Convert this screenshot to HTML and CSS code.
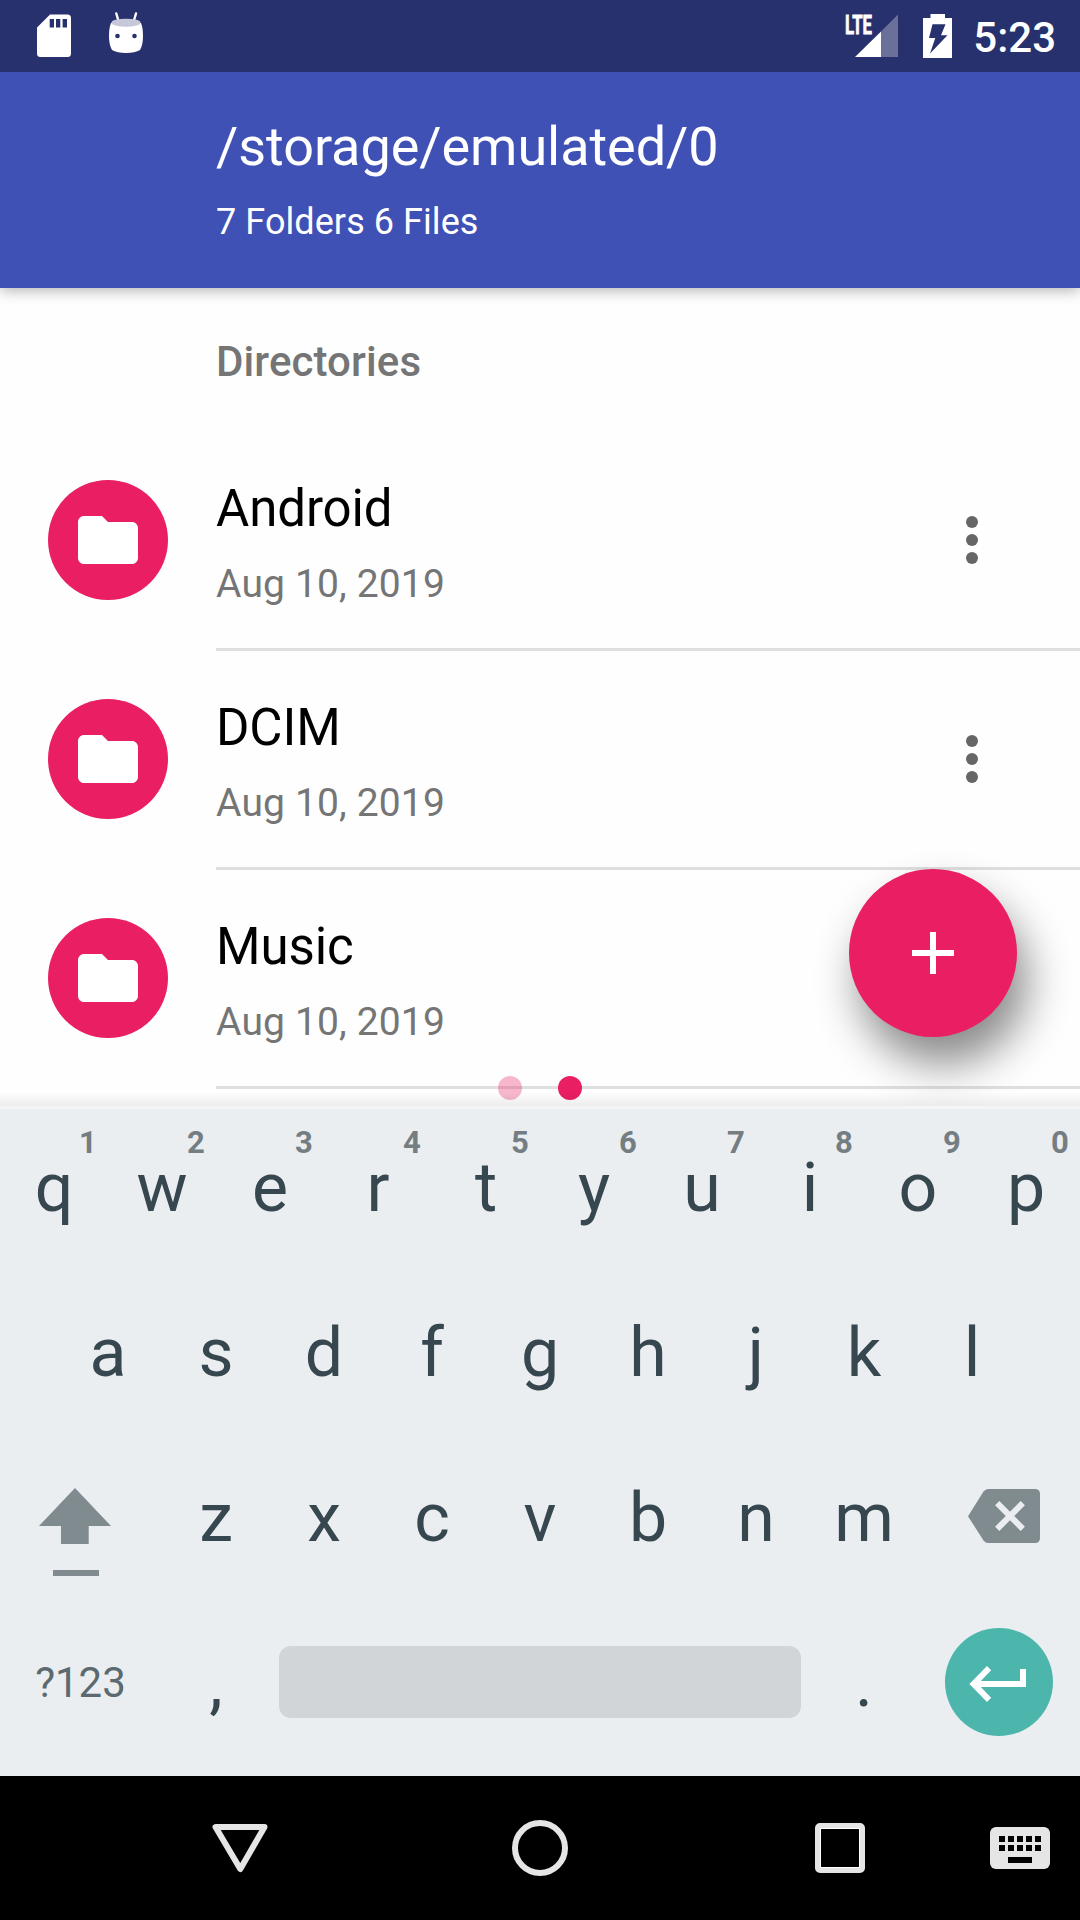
FILE: index.html
```html
<!DOCTYPE html>
<html lang="en">
<head>
<meta charset="utf-8">
<title>Files</title>
<link rel="stylesheet" href="styles.css">
</head>
<body>
<svg class="defs" width="0" height="0" aria-hidden="true">
  <symbol id="folder" viewBox="0 0 24 24"><path d="M10 4H4c-1.1 0-2 .9-2 2v12c0 1.1.9 2 2 2h16c1.1 0 2-.9 2-2V8c0-1.1-.9-2-2-2h-8z"/></symbol>
  <symbol id="more" viewBox="0 0 24 24"><circle cx="12" cy="6" r="2"/><circle cx="12" cy="12" r="2"/><circle cx="12" cy="18" r="2"/></symbol>
</svg>
<div class="screen">
  <header class="status">
    <svg width="160" height="72" viewBox="0 0 160 72">
      <path fill="#fff" fill-rule="evenodd" d="M50 14.600H67.500a3.500 3.500 0 0 1 3.500 3.500V53.500a3.500 3.500 0 0 1-3.500 3.500H40.500a3.500 3.500 0 0 1-3.500-3.500V27.500zM49.700 19V27.600H54V19zM56 19V27.600H60.300V19zM62.600 19V27.600H67V19z"/>
      <path d="M116.300 13.500l2.200 7.500M136 13.500l-2.200 7.500" stroke="#fff" stroke-width="2.400" stroke-linecap="round"/>
      <path fill="#fff" d="M111 23Q109 28 109 36Q109 45 112 50Q117 53 126 53Q135 53 140 50Q143 45 143 36Q143 28 141 23z"/>
      <ellipse cx="126" cy="22.700" rx="14.600" ry="4" fill="#c6c8d9"/>
      <circle cx="117.500" cy="36" r="2.300" fill="#27316d"/><circle cx="134.500" cy="36" r="2.300" fill="#27316d"/>
    </svg>
    <div class="status-end">
      <svg width="110" height="72" viewBox="845 0 110 72">
        <text class="lte" x="845" y="33.500" textLength="27" lengthAdjust="spacingAndGlyphs">LTE</text>
        <path fill="#fff" d="M855 57L881 31.500V57z"/>
        <path fill="#6b709a" d="M881 31.500L898 14.500V57H881z"/>
        <path fill="#fff" fill-rule="evenodd" d="M930.500 14H945v4h7v40H923V18h7.500zM932.500 24.300L929 38h6.300L930 53.500L947.500 35.300H941L945.500 24.300z"/>
      </svg>
      <span class="clock">5:23</span>
    </div>
  </header>

  <header class="appbar">
    <h1 class="title">/storage/emulated/0</h1>
    <p class="subtitle">7 Folders 6 Files</p>
  </header>

  <main class="content">
    <h2 class="section">Directories</h2>
    <ul class="list">
      <li class="row"><span class="avatar"><svg width="72" height="72"><use href="#folder"/></svg></span>
        <div class="body"><div class="text"><p class="name">Android</p><p class="date">Aug 10, 2019</p></div><svg class="more" width="72" height="72"><use href="#more"/></svg></div></li>
      <li class="row"><span class="avatar"><svg width="72" height="72"><use href="#folder"/></svg></span>
        <div class="body"><div class="text"><p class="name">DCIM</p><p class="date">Aug 10, 2019</p></div><svg class="more" width="72" height="72"><use href="#more"/></svg></div></li>
      <li class="row"><span class="avatar"><svg width="72" height="72"><use href="#folder"/></svg></span>
        <div class="body"><div class="text"><p class="name">Music</p><p class="date">Aug 10, 2019</p></div></div></li>
    </ul>
    <button class="fab" aria-label="Add"><svg width="72" height="72" viewBox="0 0 24 24"><path fill="#fff" d="M19 13h-6v6h-2v-6H5v-2h6V5h2v6h6z"/></svg></button>
    <div class="pager"><i class="dot"></i><i class="dot active"></i></div>
    <div class="edge"></div>
  </main>

  <section class="keyboard">
    <div class="keys">
      <span class="key">q<sup>1</sup></span><span class="key">w<sup>2</sup></span><span class="key">e<sup>3</sup></span><span class="key">r<sup>4</sup></span><span class="key">t<sup>5</sup></span><span class="key">y<sup>6</sup></span><span class="key">u<sup>7</sup></span><span class="key">i<sup>8</sup></span><span class="key">o<sup>9</sup></span><span class="key">p<sup>0</sup></span>
    </div>
    <div class="keys">
      <span class="key">a</span><span class="key">s</span><span class="key">d</span><span class="key">f</span><span class="key">g</span><span class="key">h</span><span class="key">j</span><span class="key">k</span><span class="key">l</span>
    </div>
    <div class="keys">
      <svg width="162" height="165" viewBox="0 0 162 165" fill="#808b8f"><path d="M75 49L111 87H88.700V105H61V87H39zM53 131H99V137H53z"/></svg>
      <span class="key">z</span><span class="key">x</span><span class="key">c</span><span class="key">v</span><span class="key">b</span><span class="key">n</span><span class="key">m</span>
      <svg width="162" height="165" viewBox="0 0 162 165"><path fill="#808b8f" d="M50 77.200L65.500 52.500Q67.500 50 70 50H117Q122 50 122 55V99Q122 104 117 104H70Q67.500 104 65.500 101.500z"/><path d="M79.200 64.200L104.800 89.800M104.800 64.200L79.200 89.800" stroke="#ebeef1" stroke-width="6"/></svg>
    </div>
    <div class="keys">
      <span class="key symbols">?123</span><span class="key">,</span><span class="key space"><i class="bar"></i></span><span class="key">.</span>
      <svg width="162" height="165" viewBox="0 0 162 165"><circle cx="81" cy="78" r="54" fill="#4db6ac"/><path fill="#fff" d="M51.400 80L69 62L73.200 66.200L62.800 77H102V65H108V83H62.800L73.200 93.700L69 98z"/></svg>
    </div>
  </section>

  <nav class="navbar">
    <svg width="1080" height="144" viewBox="0 0 1080 144">
      <g fill="none" stroke="#e5e5e5" stroke-width="6" stroke-linejoin="round">
        <path d="M215.500 51H264.500L240.300 93z"/><circle cx="540" cy="72" r="25"/>
        <rect x="818" y="50" width="44" height="44" rx="2"/>
      </g>
      <rect x="820.500" y="52.500" width="39" height="39" fill="none" stroke="#fff"/>
      <rect x="990" y="51" width="60" height="42" rx="6" fill="#e5e5e5"/>
      <path d="M999 63H1041M999 72H1041" stroke="#000" stroke-width="6" stroke-dasharray="6 3"/>
      <path d="M1008 84H1032" stroke="#000" stroke-width="6"/>
    </svg>
  </nav>
</div>
</body>
</html>
```
FILE: styles.css
```css
* { box-sizing: border-box; margin: 0; padding: 0; }
body { font-family: Roboto, "Liberation Sans", sans-serif; background: #fff; }
svg { display: block; flex: none; }
.defs { position: absolute; }
.screen { width: 1080px; height: 1920px; display: flex; flex-direction: column; overflow: hidden; }

.status { height: 72px; flex: none; background: #27316d; display: flex; justify-content: space-between; position: relative; z-index: 2; }
.status-end { display: flex; align-items: center; gap: 18px; padding-right: 24px; }
.lte { font: bold 26px Roboto, sans-serif; fill: #fff; stroke: #fff; stroke-width: .8px; }
.clock { color: #fff; font-size: 42px; font-weight: 500; line-height: 50px; padding-top: 3px; }

.appbar { height: 216px; flex: none; background: #3f51b5; color: #fff; padding: 43px 0 0 216px; position: relative; z-index: 1; box-shadow: 0 2px 14px rgba(0, 0, 0, .32); }
.title { font-size: 54px; font-weight: 400; line-height: 64px; letter-spacing: -.05px; }
.subtitle { font-size: 36px; line-height: 44px; margin-top: 21px; letter-spacing: .07px; }

.content { height: 821px; flex: none; position: relative; background: #fefefe; overflow: hidden; }
.section { height: 144px; padding: 2px 0 0 216px; font-size: 42px; font-weight: 500; line-height: 144px; letter-spacing: .1px; color: #757575; }
.list { list-style: none; }
.row { display: flex; height: 219px; padding-left: 48px; }
.avatar { width: 120px; height: 120px; margin: 48px 48px 0 0; border-radius: 50%; background: #e91e63; fill: #fff; display: flex; align-items: center; justify-content: center; }
.body { flex: 1; display: flex; justify-content: space-between; border-bottom: 3px solid #dfdfdf; padding-top: 47px; }
.name { font-size: 51px; line-height: 60px; letter-spacing: -.1px; color: #000; }
.date { font-size: 39px; line-height: 46px; margin-top: 22px; letter-spacing: .15px; color: #757575; }
.more { fill: #666; margin: 25px 72px 0 0; }
.fab { position: absolute; left: 849px; top: 581px; width: 168px; height: 168px; border: 0; border-radius: 50%; background: #e91e63; display: flex; align-items: center; justify-content: center; box-shadow: 10px 27px 44px rgba(0, 0, 0, .46); }
.pager { position: absolute; left: 498px; top: 788px; display: flex; gap: 36px; }
.dot { width: 24px; height: 24px; border-radius: 50%; background: #e91e63; opacity: .32; }
.dot.active { opacity: 1; }
.edge { position: absolute; left: 0; right: 0; bottom: 0; height: 17px; border-bottom: 3px solid #f4f5f7; background: linear-gradient(rgba(0, 0, 0, 0), rgba(0, 0, 0, .07)); }

.keyboard { height: 667px; flex: none; background: #ebeef1; color: #37474f; }
.keys { height: 165px; display: flex; justify-content: center; }
.key { width: 108px; height: 165px; padding-bottom: 7px; display: flex; align-items: center; justify-content: center; font-size: 68px; line-height: 80px; position: relative; }
.key sup { position: absolute; top: 16px; left: 68px; width: 40px; text-align: center; font-size: 31px; font-weight: 700; line-height: 36px; color: #737d82; }
.symbols { width: 162px; font-size: 42px; color: #5c6a70; padding: 0 1px 8px 0; }
.space { width: 540px; padding: 0 9px 9px; }
.bar { width: 100%; height: 72px; border-radius: 12px; background: #d1d5d8; }

.navbar { height: 144px; flex: none; background: #000; }
```
